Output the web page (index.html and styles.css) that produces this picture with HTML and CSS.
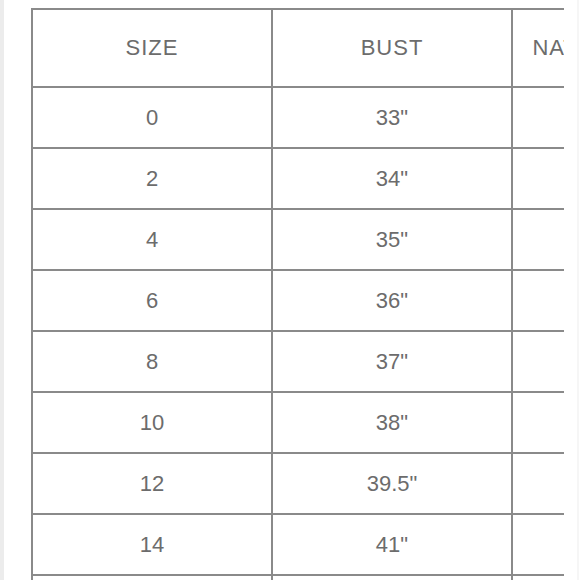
FILE: index.html
```html
<!DOCTYPE html>
<html lang="en">
<head>
<meta charset="utf-8">
<title>Size Chart</title>
<link rel="stylesheet" href="styles.css">
</head>
<body>
<div class="page">
  <div class="edge-left"></div>
  <div class="chart">
    <table class="size-table">
      <thead>
        <tr class="head">
          <th>SIZE</th>
          <th>BUST</th>
          <th class="waist">NATURAL WAIST</th>
        </tr>
      </thead>
      <tbody>
        <tr><td>0</td><td>33"</td><td class="waist">25.5"</td></tr>
        <tr><td>2</td><td>34"</td><td class="waist">26.5"</td></tr>
        <tr><td>4</td><td>35"</td><td class="waist">27.5"</td></tr>
        <tr><td>6</td><td>36"</td><td class="waist">28.5"</td></tr>
        <tr><td>8</td><td>37"</td><td class="waist">29.5"</td></tr>
        <tr><td>10</td><td>38"</td><td class="waist">30.5"</td></tr>
        <tr><td>12</td><td>39.5"</td><td class="waist">32"</td></tr>
        <tr><td>14</td><td>41"</td><td class="waist">33.5"</td></tr>
        <tr><td>16</td><td>42.5"</td><td class="waist">35"</td></tr>
      </tbody>
    </table>
  </div>
  <div class="edge-right"></div>
</div>
</body>
</html>
```
FILE: styles.css
```css
html, body {
  margin: 0;
  padding: 0;
  overflow: hidden;
  background: #ffffff;
}

.page {
  display: flex;
  width: 580px;
  height: 580px;
  overflow: hidden;
}

.edge-left {
  flex: 0 0 4px;
  background: #ececec;
}

.chart {
  flex: 0 0 533px;
  margin-left: 27px;
  padding-top: 8px;
  overflow: hidden;
}

.edge-right {
  flex: 0 0 2px;
  margin-left: 13px;
  background: #f6f6f6;
}

.size-table {
  border-collapse: separate;
  border-spacing: 0;
  border-top: 2px solid #8a8a8a;
  border-left: 2px solid #8a8a8a;
  table-layout: fixed;
  width: 722px;
  font-family: "Liberation Sans", Arial, sans-serif;
  color: #6c6c6c;
}

.size-table th,
.size-table td {
  box-sizing: border-box;
  width: 240px;
  padding: 0;
  text-align: center;
  vertical-align: middle;
  border-right: 2px solid #8a8a8a;
  border-bottom: 2px solid #8a8a8a;
  font-size: 22px;
  font-weight: normal;
  white-space: nowrap;
}

.size-table th {
  height: 78px;
  letter-spacing: 1px;
}

.size-table td {
  height: 61px;
}

.size-table .waist {
  padding-right: 11px;
}
```
